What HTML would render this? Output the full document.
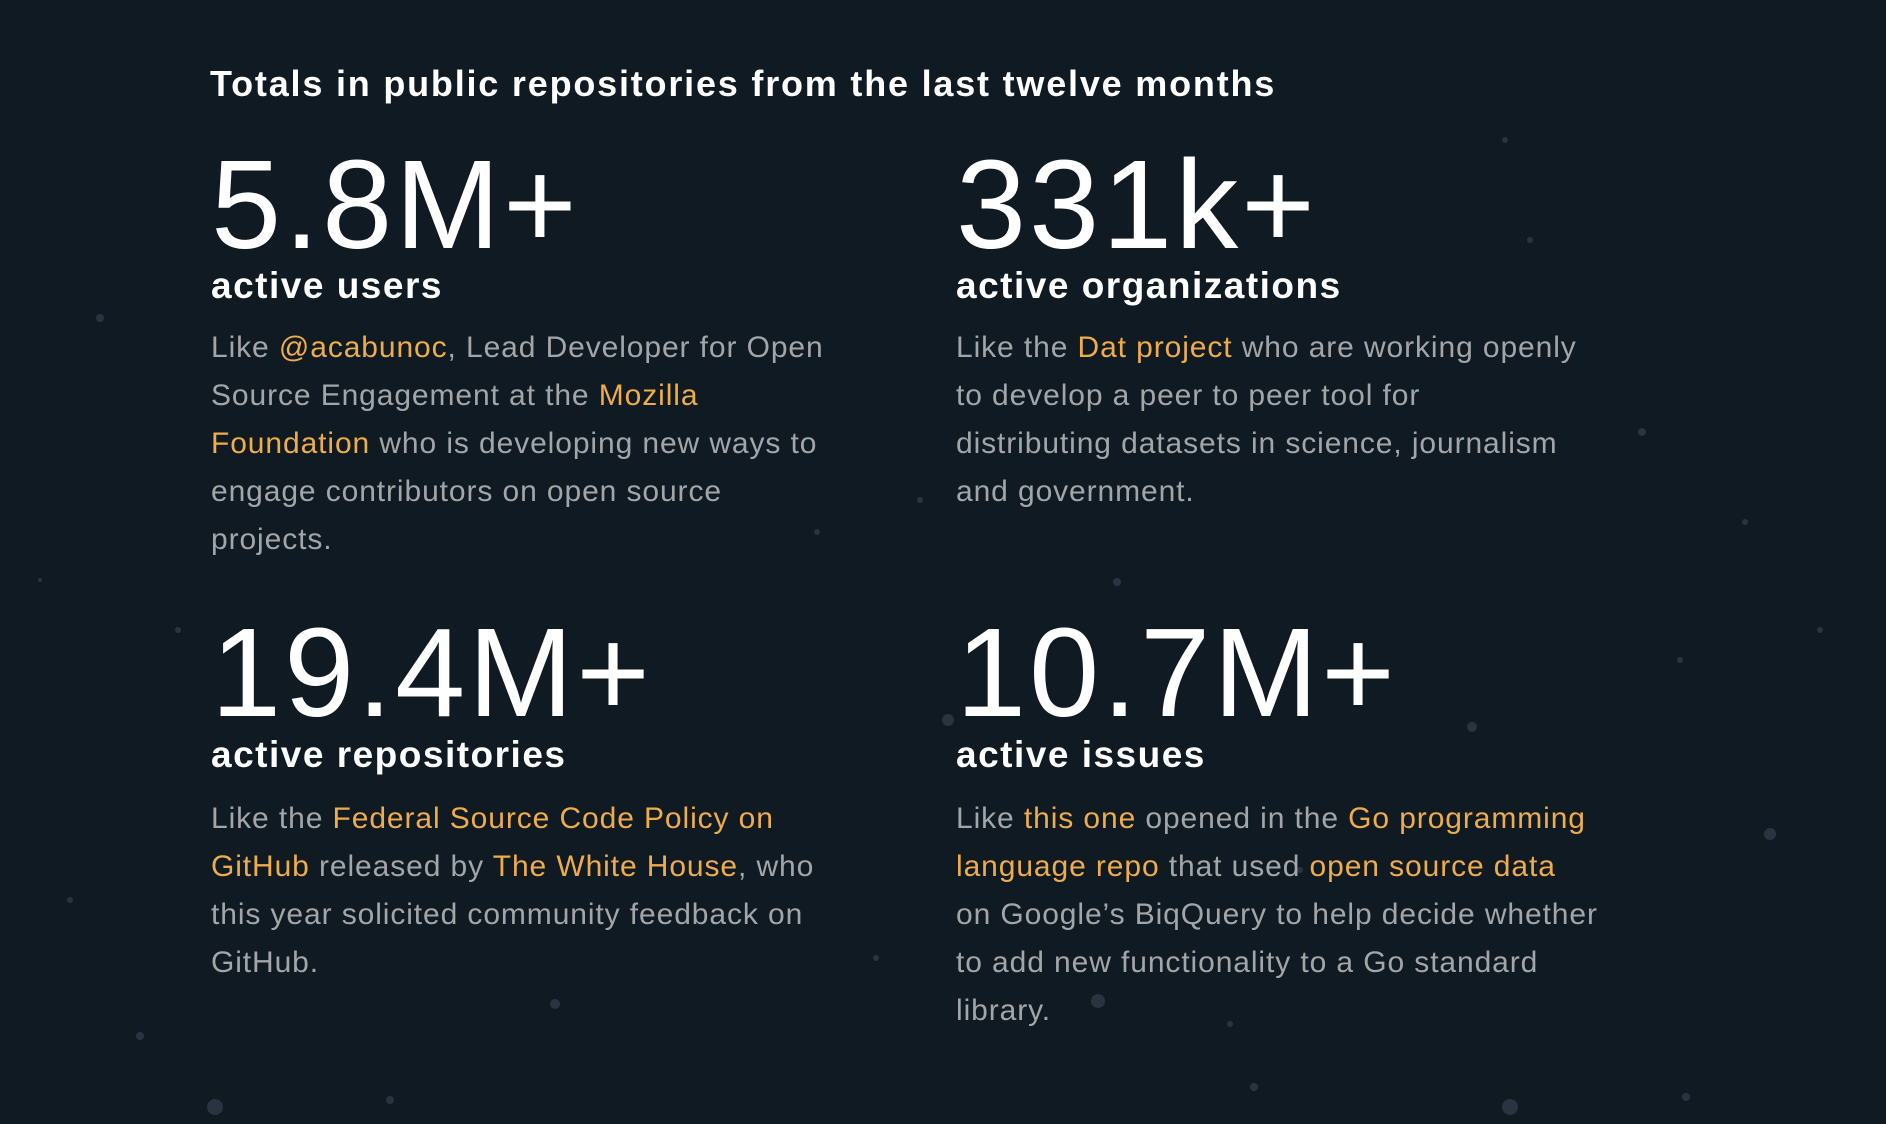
<!DOCTYPE html>
<html><head><meta charset="utf-8"><style>
html,body{margin:0;padding:0;}
body{width:1886px;height:1124px;background:#0f1a22;position:relative;overflow:hidden;font-family:"Liberation Sans",sans-serif;}
.a{position:absolute;white-space:nowrap;}
.t{font-size:36px;line-height:40px;font-weight:bold;color:#fff;left:210px;top:64px;letter-spacing:1.8px;}
.n{font-size:126px;line-height:125px;color:#fff;letter-spacing:3px;}
.s{font-size:37px;line-height:40px;font-weight:bold;color:#fff;letter-spacing:1.5px;}
.b{font-size:30px;line-height:48px;color:#a3a6a9;letter-spacing:0.9px;}
.o{color:#eeac4c;}
</style></head><body>
<svg class="a" style="left:0;top:0" width="1886" height="1124">
<g fill="#2a3440">
<circle cx="100" cy="318" r="4"/><circle cx="178" cy="630" r="3"/><circle cx="215" cy="1107" r="8"/><circle cx="1510" cy="1107" r="8"/><circle cx="1098" cy="1001" r="7"/><circle cx="1770" cy="834" r="6"/><circle cx="1642" cy="432" r="4"/><circle cx="1117" cy="582" r="4"/><circle cx="948" cy="720" r="6"/><circle cx="1472" cy="727" r="5"/><circle cx="555" cy="1004" r="5"/><circle cx="390" cy="1100" r="4"/><circle cx="1745" cy="522" r="3"/><circle cx="817" cy="532" r="3"/><circle cx="920" cy="500" r="3"/><circle cx="1254" cy="1087" r="4"/><circle cx="1686" cy="1097" r="4"/><circle cx="140" cy="1036" r="4"/><circle cx="70" cy="900" r="3"/><circle cx="1820" cy="630" r="3"/><circle cx="1300" cy="870" r="3"/><circle cx="876" cy="958" r="3"/><circle cx="1680" cy="660" r="3"/><circle cx="1530" cy="240" r="3"/><circle cx="1505" cy="140" r="3"/><circle cx="40" cy="580" r="2"/><circle cx="1230" cy="1024" r="3"/>
</g></svg>
<div class="a t">Totals in public repositories from the last twelve months</div>

<div class="a n" style="left:211px;top:142px">5.8M+</div>
<div class="a s" style="left:211px;top:266px">active users</div>
<div class="a b" style="left:211px;top:324px">Like <span class="o">@acabunoc</span>, Lead Developer for Open<br>Source Engagement at the <span class="o">Mozilla</span><br><span class="o">Foundation</span> who is developing new ways to<br>engage contributors on open source<br>projects.</div>

<div class="a n" style="left:956px;top:142px">331k+</div>
<div class="a s" style="left:956px;top:266px">active organizations</div>
<div class="a b" style="left:956px;top:324px">Like the <span class="o">Dat project</span> who are working openly<br>to develop a peer to peer tool for<br>distributing datasets in science, journalism<br>and government.</div>

<div class="a n" style="left:211px;top:610px">19.4M+</div>
<div class="a s" style="left:211px;top:735px">active repositories</div>
<div class="a b" style="left:211px;top:795px">Like the <span class="o">Federal Source Code Policy on</span><br><span class="o">GitHub</span> released by <span class="o">The White House</span>, who<br>this year solicited community feedback on<br>GitHub.</div>

<div class="a n" style="left:956px;top:610px">10.7M+</div>
<div class="a s" style="left:956px;top:735px">active issues</div>
<div class="a b" style="left:956px;top:795px">Like <span class="o">this one</span> opened in the <span class="o">Go programming</span><br><span class="o">language repo</span> that used <span class="o">open source data</span><br>on Google’s BiqQuery to help decide whether<br>to add new functionality to a Go standard<br>library.</div>
</body></html>
